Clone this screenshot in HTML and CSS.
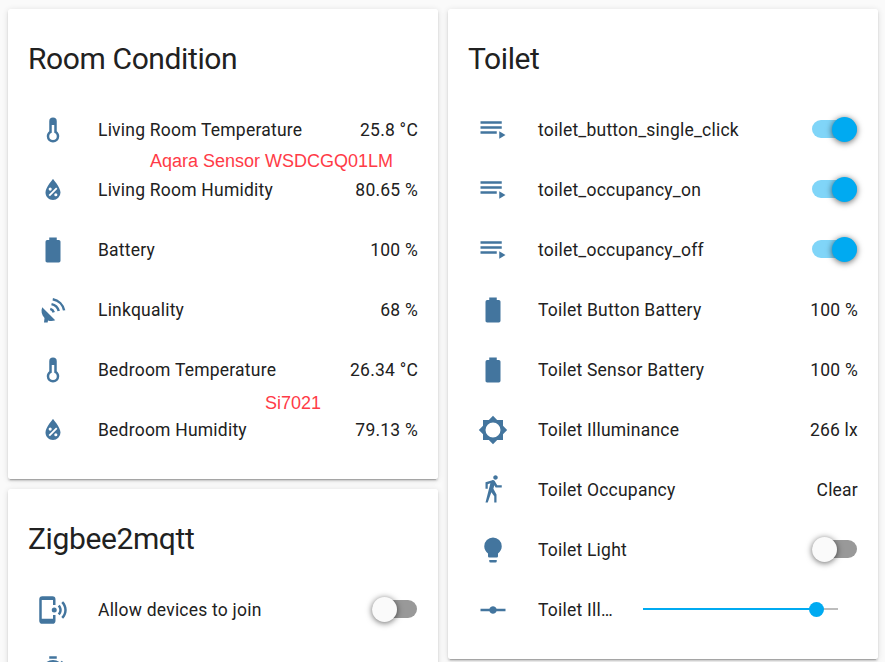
FILE: index.html
```html
<!DOCTYPE html>
<html lang="en">
<head>
<meta charset="utf-8">
<title>Home</title>
<link rel="stylesheet" href="styles.css">
</head>
<body>
<svg class="defs" aria-hidden="true">
  <symbol id="thermometer" viewBox="0 0 24 24"><path d="M17,17A5,5 0 0,1 12,22A5,5 0 0,1 7,17C7,15.36 7.79,13.91 9,13V5A3,3 0 0,1 12,2A3,3 0 0,1 15,5V13C16.21,13.91 17,15.36 17,17M11,8V14.17C9.83,14.58 9,15.69 9,17A3,3 0 0,0 12,20A3,3 0 0,0 15,17C15,15.69 14.17,14.58 13,14.17V8H11Z"/></symbol>
  <symbol id="humidity" viewBox="0 0 24 24"><path fill-rule="evenodd" d="M12,3.25C12,3.25 6,10 6,14C6,17.32 8.69,20 12,20A6,6 0 0,0 18,14C18,10 12,3.25 12,3.25M14.47,9.97L15.53,11.03L9.53,17.03L8.47,15.97M9.75,10A1.25,1.25 0 0,1 11,11.25A1.25,1.25 0 0,1 9.75,12.5A1.25,1.25 0 0,1 8.5,11.25A1.25,1.25 0 0,1 9.75,10M14.25,14.5A1.25,1.25 0 0,1 15.5,15.75A1.25,1.25 0 0,1 14.25,17A1.25,1.25 0 0,1 13,15.75A1.25,1.25 0 0,1 14.25,14.5Z"/></symbol>
  <symbol id="battery" viewBox="0 0 24 24"><path d="M16.67,4H15V2H9V4H7.33A1.33,1.33 0 0,0 6,5.33V20.67C6,21.4 6.6,22 7.33,22H16.67A1.33,1.33 0 0,0 18,20.67V5.33C18,4.6 17.4,4 16.67,4Z"/></symbol>
  <symbol id="uplink" viewBox="0 0 24 24"><path d="M3.4,9.8L13.8,20.2C11.9,21 9.8,21 8,20.3L7.7,22H4.8L5.2,18.4C2.8,16 2.2,12.7 3.4,9.8Z"/><path class="stroke" d="M9.8,11.1A4,4 0 0,1 12.6,13.9M10.8,7.3A7.6,7.6 0 0,1 16.6,12.8M11.8,3.4A11.2,11.2 0 0,1 20.9,12.3"/></symbol>
  <symbol id="script" viewBox="0 0 24 24"><path d="M19,9H2V11H19V9M19,5H2V7H19V5M2,15H15V13H2V15M17,13V19L22,16L17,13Z"/></symbol>
  <symbol id="brightness" viewBox="0 0 24 24"><path fill-rule="evenodd" d="M12,18A6,6 0 0,1 6,12A6,6 0 0,1 12,6A6,6 0 0,1 18,12A6,6 0 0,1 12,18M20,15.31L23.31,12L20,8.69V4H15.31L12,0.69L8.69,4H4V8.69L0.69,12L4,15.31V20H8.69L12,23.31L15.31,20H20V15.31Z"/></symbol>
  <symbol id="walk" viewBox="0 0 24 24"><path d="M14.12,10H19V8.2H15.38L13.38,4.87C13.08,4.37 12.54,4.03 11.92,4.03C11.74,4.03 11.58,4.06 11.42,4.11L6,5.8V11H7.8V7.33L9.91,6.67L6,22H7.8L10.67,13.89L13,17V22H14.8V15.59L12.31,11.05L13.04,8.18M14,3.8C15,3.8 15.8,3 15.8,2C15.8,1 15,0.2 14,0.2C13,0.2 12.2,1 12.2,2C12.2,3 13,3.8 14,3.8Z"/></symbol>
  <symbol id="bulb" viewBox="0 0 24 24"><path d="M12,2A7,7 0 0,0 5,9C5,11.38 6.19,13.47 8,14.74V17A1,1 0 0,0 9,18H15A1,1 0 0,0 16,17V14.74C17.81,13.47 19,11.38 19,9A7,7 0 0,0 12,2M9,21A1,1 0 0,0 10,22H14A1,1 0 0,0 15,21V20H9V21Z"/></symbol>
  <symbol id="vertex" viewBox="0 0 24 24"><path d="M2,11H9.17C9.58,9.83 10.69,9 12,9C13.31,9 14.42,9.83 14.83,11H22V13H14.83C14.42,14.17 13.31,15 12,15C10.69,15 9.58,14.17 9.17,13H2V11Z"/></symbol>
  <symbol id="phone" viewBox="0 0 24 24"><path d="M20.07,4.93C21.88,6.74 23,9.24 23,12C23,14.76 21.88,17.26 20.07,19.07L18.66,17.66C20.11,16.22 21,14.22 21,12C21,9.79 20.11,7.78 18.66,6.34L20.07,4.93M17.24,7.76C18.33,8.85 19,10.35 19,12C19,13.65 18.33,15.15 17.24,16.24L15.83,14.83C16.55,14.11 17,13.11 17,12C17,10.89 16.55,9.89 15.83,9.17L17.24,7.76M13,10A2,2 0 0,1 15,12A2,2 0 0,1 13,14A2,2 0 0,1 11,12A2,2 0 0,1 13,10M11.5,1A2.5,2.5 0 0,1 14,3.5V8H12V4H3V19H12V16H14V20.5A2.5,2.5 0 0,1 11.5,23H3.5A2.5,2.5 0 0,1 1,20.5V3.5A2.5,2.5 0 0,1 3.5,1H11.5Z"/></symbol>
  <symbol id="timer" viewBox="0 0 24 24"><path d="M12,20A7,7 0 0,1 5,13A7,7 0 0,1 12,6A7,7 0 0,1 19,13A7,7 0 0,1 12,20M19.03,7.39L20.45,5.97C20,5.46 19.55,5 19.04,4.56L17.62,6C16.07,4.74 14.12,4 12,4A9,9 0 0,0 3,13A9,9 0 0,0 12,22C17,22 21,17.97 21,13C21,10.88 20.26,8.93 19.03,7.39M11,14H13V8H11M15,1H9V3H15V1Z"/></symbol>
</svg>
<main class="board">
  <div class="column">
    <section class="card">
      <h1 class="title">Room Condition</h1>
      <div class="row"><svg class="icon"><use href="#thermometer"/></svg><span class="name">Living Room Temperature</span><span class="state">25.8 °C</span><span class="note note-aqara">Aqara Sensor WSDCGQ01LM</span></div>
      <div class="row"><svg class="icon"><use href="#humidity"/></svg><span class="name">Living Room Humidity</span><span class="state">80.65 %</span></div>
      <div class="row"><svg class="icon"><use href="#battery"/></svg><span class="name">Battery</span><span class="state">100 %</span></div>
      <div class="row"><svg class="icon"><use href="#uplink"/></svg><span class="name">Linkquality</span><span class="state">68 %</span></div>
      <div class="row"><svg class="icon"><use href="#thermometer"/></svg><span class="name">Bedroom Temperature</span><span class="state">26.34 °C</span><span class="note note-si">Si7021</span></div>
      <div class="row"><svg class="icon"><use href="#humidity"/></svg><span class="name">Bedroom Humidity</span><span class="state">79.13 %</span></div>
    </section>
    <section class="card">
      <h1 class="title">Zigbee2mqtt</h1>
      <div class="row"><svg class="icon"><use href="#phone"/></svg><span class="name">Allow devices to join</span><span class="toggle"></span></div>
      <div class="row"><svg class="icon"><use href="#timer"/></svg></div>
    </section>
  </div>
  <div class="column">
    <section class="card">
      <h1 class="title">Toilet</h1>
      <div class="row"><svg class="icon"><use href="#script"/></svg><span class="name">toilet_button_single_click</span><span class="toggle on"></span></div>
      <div class="row"><svg class="icon"><use href="#script"/></svg><span class="name">toilet_occupancy_on</span><span class="toggle on"></span></div>
      <div class="row"><svg class="icon"><use href="#script"/></svg><span class="name">toilet_occupancy_off</span><span class="toggle on"></span></div>
      <div class="row"><svg class="icon"><use href="#battery"/></svg><span class="name">Toilet Button Battery</span><span class="state">100 %</span></div>
      <div class="row"><svg class="icon"><use href="#battery"/></svg><span class="name">Toilet Sensor Battery</span><span class="state">100 %</span></div>
      <div class="row"><svg class="icon"><use href="#brightness"/></svg><span class="name">Toilet Illuminance</span><span class="state">266 lx</span></div>
      <div class="row"><svg class="icon"><use href="#walk"/></svg><span class="name">Toilet Occupancy</span><span class="state">Clear</span></div>
      <div class="row"><svg class="icon"><use href="#bulb"/></svg><span class="name">Toilet Light</span><span class="toggle"></span></div>
      <div class="row"><svg class="icon"><use href="#vertex"/></svg><span class="name">Toilet Ill…</span><span class="slider"></span></div>
    </section>
  </div>
</main>
</body>
</html>
```
FILE: styles.css
```css
html {
  height: 100%;
  overflow: hidden;
}

body {
  height: 100%;
  margin: 0;
  overflow: hidden;
  background: #fafafa;
  color: #212121;
  font: 17.5px/24px Roboto, sans-serif;
}

.defs {
  display: none;
}

.board {
  box-sizing: border-box;
  display: flex;
  gap: 10px;
  height: 100%;
  overflow: hidden;
  padding: 9px 7px 0 8px;
}

.column {
  flex: 1;
  display: flex;
  flex-direction: column;
  gap: 10px;
}

.card {
  flex: none;
  box-sizing: border-box;
  padding: 0 20px 19px;
  border-radius: 2.5px;
  background: #fff;
  box-shadow: 0 2px 2px rgba(0, 0, 0, .14), 0 1px 6px rgba(0, 0, 0, .12), 0 3px 1px -2px rgba(0, 0, 0, .2);
}

.title {
  margin: 0;
  padding: 30px 0 21px;
  font-size: 30px;
  font-weight: 400;
  line-height: 40px;
  letter-spacing: -.013em;
}

.row {
  position: relative;
  display: flex;
  align-items: center;
  height: 60px;
}

.icon {
  flex: none;
  width: 30px;
  height: 30px;
  margin: 0 30px 0 10px;
  fill: #43759e;
}

.stroke {
  fill: none;
  stroke: #43759e;
  stroke-width: 2;
}

.name {
  flex: 1;
  letter-spacing: .22px;
  white-space: nowrap;
}

.state {
  letter-spacing: .22px;
}

.note {
  position: absolute;
  top: 49px;
  color: #ff3b47;
  font-family: "Liberation Sans", sans-serif;
  font-size: 18px;
  white-space: nowrap;
}

.note-aqara {
  left: 122px;
}

.note-si {
  top: 51px;
  left: 237px;
}

.toggle {
  position: relative;
  width: 45px;
  height: 18px;
  margin: 0 1px 2px 0;
  border-radius: 9px;
  background: #999;
}

.toggle::after {
  content: "";
  position: absolute;
  top: -3px;
  left: 0;
  width: 25px;
  height: 25px;
  border-radius: 50%;
  background: #fafafa;
  box-shadow: 0 1px 6px rgba(0, 0, 0, .6);
}

.toggle.on {
  background: #80d5f8;
}

.toggle.on::after {
  left: 20px;
  background: #00aaf1;
}

.slider {
  position: relative;
  width: 195px;
  height: 2px;
  margin: 0 20px 2px 0;
  background: linear-gradient(to right, #00aaf1 174px, #bdbdbd 174px);
}

.slider::after {
  content: "";
  position: absolute;
  top: -6px;
  left: 166px;
  width: 15px;
  height: 15px;
  border-radius: 50%;
  background: #00aaf1;
}
```
